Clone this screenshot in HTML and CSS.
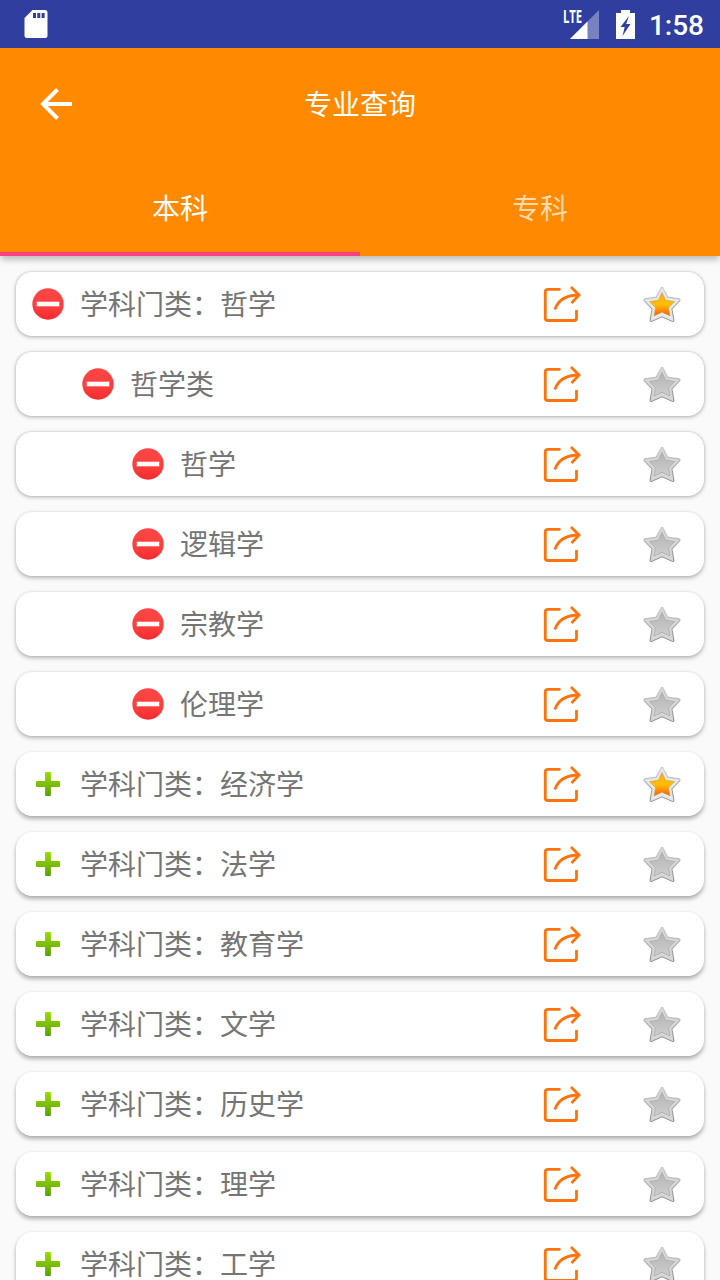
FILE: index.html
```html
<!DOCTYPE html>
<html lang="zh-CN">
<head>
  <meta charset="UTF-8">
  <meta name="viewport" content="width=device-width, initial-scale=1.0">
  <title>专业查询</title>
  <link rel="stylesheet" href="styles.css">
</head>
<body>

  <!-- Shared icons -->
  <svg class="sprite" width="0" height="0">
    <defs>
      <linearGradient id="redFill" x1="0" y1="0" x2="0" y2="1">
        <stop offset="0" stop-color="#ff4646"/>
        <stop offset="0.6" stop-color="#ff3e3e"/>
        <stop offset="1" stop-color="#f42a2e"/>
      </linearGradient>
      <linearGradient id="greenFill" x1="0" y1="0" x2="0" y2="1">
        <stop offset="0" stop-color="#92dc00"/>
        <stop offset="0.5" stop-color="#7cc000"/>
        <stop offset="1" stop-color="#58a000"/>
      </linearGradient>
      <linearGradient id="rimEdge" x1="0" y1="0" x2="0" y2="1">
        <stop offset="0" stop-color="#cccccc"/>
        <stop offset="1" stop-color="#8c8c8c"/>
      </linearGradient>
      <linearGradient id="goldFill" x1="0" y1="0" x2="0" y2="1">
        <stop offset="0" stop-color="#ffa800"/>
        <stop offset="0.5" stop-color="#ffc000"/>
        <stop offset="1" stop-color="#ff5a10"/>
      </linearGradient>
      <linearGradient id="greyFill" x1="0" y1="0" x2="0" y2="1">
        <stop offset="0" stop-color="#b4b4b4"/>
        <stop offset="1" stop-color="#cecece"/>
      </linearGradient>
    </defs>

    <symbol id="minus" viewBox="0 0 32 32">
      <circle cx="16" cy="16" r="15.7" fill="url(#redFill)"/>
      <rect x="4.3" y="13.2" width="23.4" height="5.6" fill="#ff8585"/>
      <rect x="5" y="14" width="22" height="4" fill="#fff"/>
    </symbol>
    <symbol id="plus" viewBox="0 0 32 32">
      <path d="M14.1 4h3.8q1 0 1 1v8.1H27q1 0 1 1v3.8q0 1-1 1h-8.100V27q0 1-1 1h-3.8q-1 0-1-1v-8.100H5q-1 0-1-1v-3.8q0-1 1-1h8.100V5q0-1 1-1z" fill="url(#greenFill)"/>
    </symbol>
    <symbol id="share" viewBox="0 0 38 38">
      <g fill="none" stroke="#ff730f" stroke-width="2.8">
        <path d="M17.5 4.3H4.8Q2.3 4.3 2.3 6.8V33Q2.3 35.5 4.8 35.5H31Q33.5 35.5 33.5 33V25"/>
        <path d="M11.8 24.5Q17 10 36 10"/>
        <path d="M28 2L36 10L28.5 18"/>
      </g>
    </symbol>
    <!-- Dark edge, light rim, then the coloured centre -->
    <symbol id="star-on" viewBox="0 0 40 40">
      <path d="M20 4.500L25 14.200L36.800 16L28.700 24.500L30.700 36.300L20 31.500L9.300 36.300L11.300 24.500L3.200 16L15 14.200Z" fill="none" stroke="url(#rimEdge)" stroke-width="3.400" stroke-linejoin="round"/>
      <path d="M20 4.500L25 14.200L36.800 16L28.700 24.500L30.700 36.300L20 31.500L9.300 36.300L11.300 24.500L3.200 16L15 14.200Z" fill="#ebebeb" stroke="#e6e6e6" stroke-width="1.400" stroke-linejoin="round"/>
      <path d="M20 8.500L23.700 16.200L32.500 17.600L26.500 23.700L28 32L20 28.300L12 32L13.500 23.700L7.500 17.600L16.300 16.200Z" fill="url(#goldFill)" stroke="#c9a060" stroke-width="0.600" stroke-linejoin="round"/>
    </symbol>
    <symbol id="star-off" viewBox="0 0 40 40">
      <path d="M20 4.500L25 14.200L36.800 16L28.700 24.500L30.700 36.300L20 31.500L9.300 36.300L11.300 24.500L3.200 16L15 14.200Z" fill="none" stroke="url(#rimEdge)" stroke-width="3.400" stroke-linejoin="round"/>
      <path d="M20 4.500L25 14.200L36.800 16L28.700 24.500L30.700 36.300L20 31.500L9.300 36.300L11.300 24.500L3.200 16L15 14.200Z" fill="#d8d8d8" stroke="#d4d4d4" stroke-width="1.400" stroke-linejoin="round"/>
      <path d="M20 8.500L23.700 16.200L32.500 17.600L26.500 23.700L28 32L20 28.300L12 32L13.500 23.700L7.500 17.600L16.300 16.200Z" fill="url(#greyFill)" stroke="#aaa" stroke-width="0.800" stroke-linejoin="round"/>
    </symbol>
  </svg>

  <!-- Status bar -->
  <div class="status-bar">
    <svg class="sd-card" width="24" height="28" viewBox="0 0 24 28">
      <path d="M8.5 0H21q2.5 0 2.5 2.5v23Q23.5 28 21 28H3Q.5 28 .5 25.5V8z" fill="#fff"/>
      <path d="M9 3h3v5H9zM13.3 3h3v5h-3zM17.6 3h3v5h-3z" fill="#303f9f"/>
    </svg>
    <div class="signal">
      <span class="lte">LTE</span>
      <svg width="29" height="29" viewBox="0 0 29 29">
        <path d="M29 0V29H0z" fill="#fff" opacity="0.35"/>
        <path d="M17.5 11.5V29H0z" fill="#fff"/>
      </svg>
    </div>
    <svg class="battery" width="19" height="29" viewBox="0 0 19 29">
      <path d="M5 0h9v3h5v26H0V3h5z" fill="#fff"/>
      <path d="M13 6L4.500 17h4.200L6.500 26L14.500 14h-4.300z" fill="#303f9f"/>
    </svg>
    <span class="clock">1:58</span>
  </div>

  <!-- Title and tabs -->
  <header>
    <div class="toolbar">
      <svg class="back" width="32" height="32" viewBox="0 0 32 32">
        <path d="M32 16H3M17.5 1.5L3 16L17.5 30.5" fill="none" stroke="#fff" stroke-width="4"/>
      </svg>
      <h1>专业查询</h1>
    </div>
    <div class="tabs">
      <div class="tab active">本科</div>
      <div class="tab">专科</div>
    </div>
  </header>

  <div class="list" id="list"></div>

  <script>
    const rows = [
      { name: "学科门类：哲学", level: 1, open: true, starred: true },
      { name: "哲学类", level: 2, open: true },
      { name: "哲学", level: 3, open: true },
      { name: "逻辑学", level: 3, open: true },
      { name: "宗教学", level: 3, open: true },
      { name: "伦理学", level: 3, open: true },
      { name: "学科门类：经济学", level: 1, starred: true },
      { name: "学科门类：法学", level: 1 },
      { name: "学科门类：教育学", level: 1 },
      { name: "学科门类：文学", level: 1 },
      { name: "学科门类：历史学", level: 1 },
      { name: "学科门类：理学", level: 1 },
      { name: "学科门类：工学", level: 1 }
    ];

    // Render one card for each subject
    document.getElementById("list").innerHTML = rows.map((row, i) => `
      <div class="row level-${row.level} ${i < 3 ? "flat" : i > 5 ? "raised" : ""}">
        <svg class="toggle"><use href="#${row.open ? "minus" : "plus"}"/></svg>
        <span class="name">${row.name}</span>
        <svg class="share"><use href="#share"/></svg>
        <svg class="star"><use href="#${row.starred ? "star-on" : "star-off"}"/></svg>
      </div>`).join("");
  </script>

</body>
</html>
```
FILE: styles.css
```css
/* Global Styles */
* {
  margin: 0;
  padding: 0;
  box-sizing: border-box;
}

body {
  height: 1280px;
  overflow: hidden;
  display: flex;
  flex-direction: column;
  font-family: "Noto Sans CJK SC", sans-serif;
  background: #fafafa;
}

svg {
  display: block;
  flex-shrink: 0;
}

.sprite {
  position: absolute;
}

/* Status Bar */
.status-bar {
  height: 48px;
  flex-shrink: 0;
  display: flex;
  align-items: center;
  padding: 0 16px 0 24px;
  background: #303f9f;
  color: #fff;
}

.signal {
  display: flex;
  margin-left: auto;
}

.lte {
  width: 7px;
  font: bold 17px/14px "Open Sans", sans-serif;
  transform: scaleX(0.66);
  transform-origin: left top;
}

.battery {
  margin: 0 14px 0 17px;
}

.clock {
  font: 500 28px/32px Roboto, sans-serif;
  padding-top: 3px;
}

/* Header */
header {
  height: 208px;
  flex-shrink: 0;
  background: #ff8900;
  color: #fff;
  box-shadow: 0 5px 6px -1px rgba(0, 0, 0, 0.24);
}

.toolbar {
  height: 112px;
  display: grid;
  grid-template-columns: 32px 1fr 32px;
  align-items: center;
  padding: 0 40px;
}

h1 {
  padding-bottom: 2px;
  font-size: 28px;
  font-weight: 400;
  line-height: 40px;
  text-align: center;
}

.tabs {
  height: 96px;
  display: flex;
}

.tab {
  flex: 1;
  font-size: 28px;
  line-height: 94px;
  text-align: center;
  color: rgba(255, 255, 255, 0.7);
}

.tab.active {
  color: #fff;
  box-shadow: inset 0 -4px #ff4081;
}

/* List */
.list {
  display: flex;
  flex-direction: column;
  gap: 16px;
  padding: 16px;
}

.row {
  height: 64px;
  flex-shrink: 0;
  display: flex;
  align-items: center;
  padding: 0 22px 0 16px;
  background: #fff;
  border-radius: 16px;
  box-shadow: 0 2px 4px rgba(0, 0, 0, 0.28), 0 0 2px rgba(0, 0, 0, 0.12);
}

.row.flat {
  box-shadow: 0 1px 4px rgba(0, 0, 0, 0.3), 0 0 2px rgba(0, 0, 0, 0.14);
}

.row.raised {
  box-shadow: 0 3px 4px rgba(0, 0, 0, 0.3), 0 0 2px rgba(0, 0, 0, 0.08);
}

.level-2 {
  padding-left: 66px;
}

.level-3 {
  padding-left: 116px;
}

.toggle {
  width: 32px;
  height: 32px;
}

.name {
  flex: 1;
  margin-left: 16px;
  padding-bottom: 2px;
  font-size: 28px;
  line-height: 40px;
  color: #757575;
}

.share {
  width: 38px;
  height: 38px;
}

.star {
  width: 40px;
  height: 40px;
  margin-left: 61px;
}
```
